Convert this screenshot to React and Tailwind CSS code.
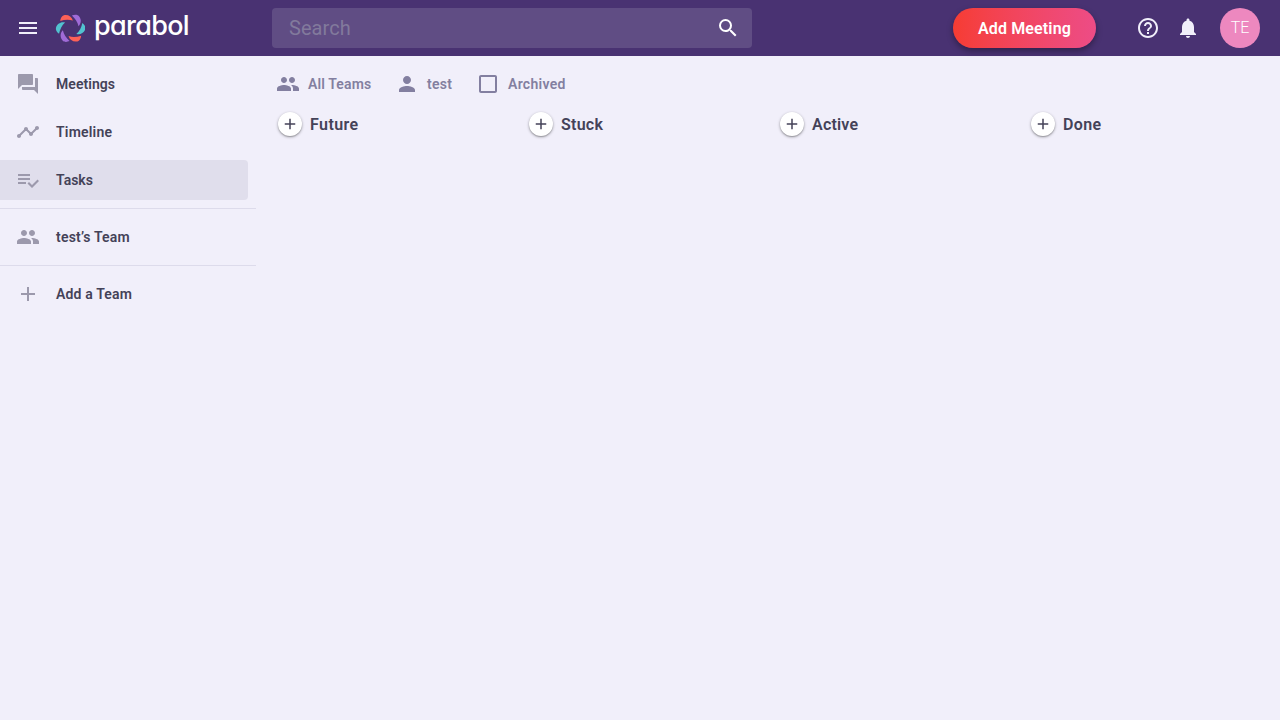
const PATHS = {
  menu: 'M3 18h18v-2H3v2zm0-5h18v-2H3v2zm0-7v2h18V6H3z',
  search:
    'M15.5 14h-.79l-.28-.27A6.471 6.471 0 0 0 16 9.5 6.5 6.5 0 1 0 9.5 16c1.61 0 3.09-.59 4.23-1.57l.27.28v.79l5 4.99L20.49 19l-4.99-5zm-6 0C7.01 14 5 11.99 5 9.5S7.01 5 9.5 5 14 7.01 14 9.5 11.99 14 9.5 14z',
  help: 'M11 18h2v-2h-2v2zm1-16C6.48 2 2 6.48 2 12s4.48 10 10 10 10-4.48 10-10S17.52 2 12 2zm0 18c-4.41 0-8-3.59-8-8s3.59-8 8-8 8 3.59 8 8-3.59 8-8 8zm0-14c-2.21 0-4 1.79-4 4h2c0-1.1.9-2 2-2s2 .9 2 2c0 2-3 1.75-3 5h2c0-2.25 3-2.5 3-5 0-2.21-1.79-4-4-4z',
  bell: 'M12 22c1.1 0 2-.9 2-2h-4c0 1.1.89 2 2 2zm6-6v-5c0-3.07-1.64-5.64-4.5-6.32V4c0-.83-.67-1.5-1.5-1.5s-1.5.67-1.5 1.5v.68C7.63 5.36 6 7.92 6 11v5l-2 2v1h16v-1l-2-2z',
  forum:
    'M21 6h-2v9H6v2c0 .55.45 1 1 1h11l4 4V7c0-.55-.45-1-1-1zm-4 6V3c0-.55-.45-1-1-1H3c-.55 0-1 .45-1 1v14l4-4h10c.55 0 1-.45 1-1z',
  timeline:
    'M23 8c0 1.1-.9 2-2 2-.18 0-.35-.02-.51-.07l-3.56 3.55c.05.16.07.34.07.52 0 1.1-.9 2-2 2s-2-.9-2-2c0-.18.02-.36.07-.52l-2.55-2.55c-.16.05-.34.07-.52.07s-.36-.02-.52-.07l-4.55 4.56c.05.16.07.33.07.51 0 1.1-.9 2-2 2s-2-.9-2-2 .9-2 2-2c.18 0 .35.02.51.07l4.56-4.55C8.02 9.36 8 9.18 8 9c0-1.1.9-2 2-2s2 .9 2 2c0 .18-.02.36-.07.52l2.55 2.55c.16-.05.34-.07.52-.07s.36.02.52.07l3.55-3.56C19.02 8.35 19 8.18 19 8c0-1.1.9-2 2-2s2 .9 2 2z',
  tasks:
    'M14 10H2v2h12v-2zm0-4H2v2h12V6zM2 16h8v-2H2v2zm19.5-4.5L23 13l-6.99 7-4.51-4.5L13 14l3.01 3 5.49-5.5z',
  group:
    'M16 11c1.66 0 2.99-1.34 2.99-3S17.66 5 16 5s-3 1.34-3 3 1.34 3 3 3zm-8 0c1.66 0 2.99-1.34 2.99-3S9.66 5 8 5 5 6.34 5 8s1.34 3 3 3zm0 2c-2.33 0-7 1.17-7 3.5V19h14v-2.5c0-2.33-4.67-3.5-7-3.5zm8 0c-.29 0-.62.02-.97.05 1.16.84 1.97 1.97 1.97 3.45V19h6v-2.5c0-2.33-4.67-3.5-7-3.5z',
  add: 'M19 13h-6v6h-2v-6H5v-2h6V5h2v6h6v2z',
  person:
    'M12 12c2.21 0 4-1.79 4-4s-1.79-4-4-4-4 1.79-4 4 1.79 4 4 4zm0 2c-2.67 0-8 1.34-8 4v2h16v-2c0-2.66-5.33-4-8-4z',
  box: 'M19 5v14H5V5h14m0-2H5c-1.1 0-2 .9-2 2v14c0 1.1.9 2 2 2h14c1.1 0 2-.9 2-2V5c0-1.1-.9-2-2-2z',
}

function Icon({ name, className = 'size-6' }) {
  return (
    <svg viewBox="0 0 24 24" fill="currentColor" className={`block shrink-0 ${className}`}>
      <path d={PATHS[name]} />
    </svg>
  )
}

const PETALS = ['#fd6157', '#a06bd8', '#52c2d0', '#fd6157', '#a06bd8', '#52c2d0']

function Logo() {
  return (
    <svg viewBox="-15.7 -15.3 30 30" className="block size-[30px] shrink-0">
      {PETALS.map((fill, i) => (
        <path
          key={i}
          fill={fill}
          transform={`rotate(${i * 60})`}
          d="M-10.5-7.4C-10.2-10.2-8.8-12.6-6.8-13.1C-3-14 1-12.1 2.2-7.8C-2-9.1-6-8.8-10.5-7.4Z"
        />
      ))}
    </svg>
  )
}

function NavItem({ icon, label, active, spacing }) {
  return (
    <div className={`mr-2 flex h-10 items-center rounded-r pl-4 ${active ? 'bg-[#e0deec]' : ''}`}>
      <Icon name={icon} className="size-6 text-[#9c99ac]" />
      <span className={`ml-4 text-sm font-semibold text-[#444258] ${spacing}`}>{label}</span>
    </div>
  )
}

function Filter({ icon, label, className, spacing }) {
  return (
    <div className={`flex shrink-0 items-center ${className}`}>
      <Icon name={icon} />
      <span className={`ml-2 text-sm font-semibold ${spacing}`}>{label}</span>
    </div>
  )
}

function Column({ label, spacing }) {
  return (
    <div className="flex w-[251px] shrink-0 items-center">
      <div className="flex size-6 items-center justify-center rounded-full bg-white text-[#444258] shadow-[0_1px_3px_rgba(0,0,0,0.35),0_1px_1px_rgba(0,0,0,0.15)]">
        <Icon name="add" className="size-[18px]" />
      </div>
      <span className={`ml-2 pt-0.5 text-base leading-6 font-semibold text-[#444258] ${spacing}`}>{label}</span>
    </div>
  )
}

export default function App() {
  return (
    <div className="flex h-screen w-full flex-col overflow-hidden bg-[#f1effa] font-[Roboto,sans-serif]">
      <header className="flex h-14 shrink-0 items-center bg-[#493272] pr-5 pl-4 text-[#f1effa]">
        <Icon name="menu" />
        <div className="ml-[15px] flex w-[217px] items-center">
          <Logo />
          <span className="ml-[9px] pb-1 font-[Inter,sans-serif] text-[27px] leading-8 font-medium tracking-[-0.7px] text-white [font-feature-settings:'cv11']">
            parabol
          </span>
        </div>
        <div className="flex h-10 w-[480px] items-center justify-between rounded bg-[#604d84] pr-3 pl-[17px]">
          <span className="text-xl font-normal tracking-[0.05px] text-[#827a9c]">Search</span>
          <Icon name="search" className="size-6 text-white" />
        </div>
        <button className="ml-auto flex h-10 w-[143px] items-center justify-center rounded-full bg-linear-to-r from-[#f63c32] to-[#ed4c86] pt-px text-base font-semibold tracking-[0.14px] text-white shadow-[0_3px_6px_rgba(0,0,0,0.35)]">
          Add Meeting
        </button>
        <Icon name="help" className="ml-10 size-6" />
        <Icon name="bell" className="ml-4 size-6" />
        <div className="ml-5 flex size-10 items-center justify-center rounded-full bg-[#ed88bf] text-base font-light text-white">
          TE
        </div>
      </header>
      <div className="flex min-h-0 grow">
        <nav className="w-64 shrink-0 pt-2">
          <div className="flex flex-col gap-2 border-b border-[#dddbeb] pb-2">
            <NavItem icon="forum" label="Meetings" spacing="tracking-[0.06px]" />
            <NavItem icon="timeline" label="Timeline" spacing="tracking-[0.2px]" />
            <NavItem icon="tasks" label="Tasks" active spacing="tracking-normal" />
          </div>
          <div className="border-b border-[#dddbeb] py-2">
            <NavItem icon="group" label="test’s Team" spacing="tracking-[0.2px]" />
          </div>
          <div className="pt-2">
            <NavItem icon="add" label="Add a Team" spacing="tracking-[0.16px]" />
          </div>
        </nav>
        <main className="min-w-0 grow pt-4 pl-5">
          <div className="flex h-6 items-center text-[#837fa0]">
            <Filter icon="group" label="All Teams" className="w-[119px]" spacing="tracking-[0.13px]" />
            <Filter icon="person" label="test" className="w-[81px]" spacing="tracking-[0.25px]" />
            <Filter icon="box" label="Archived" className="w-[100px]" spacing="tracking-[0.3px]" />
          </div>
          <div className="mt-4 ml-0.5 flex h-6 items-center">
            <Column label="Future" spacing="tracking-[0.42px]" />
            <Column label="Stuck" spacing="tracking-[0.25px]" />
            <Column label="Active" spacing="tracking-[0.2px]" />
            <Column label="Done" spacing="tracking-[0.35px]" />
          </div>
        </main>
      </div>
    </div>
  )
}
